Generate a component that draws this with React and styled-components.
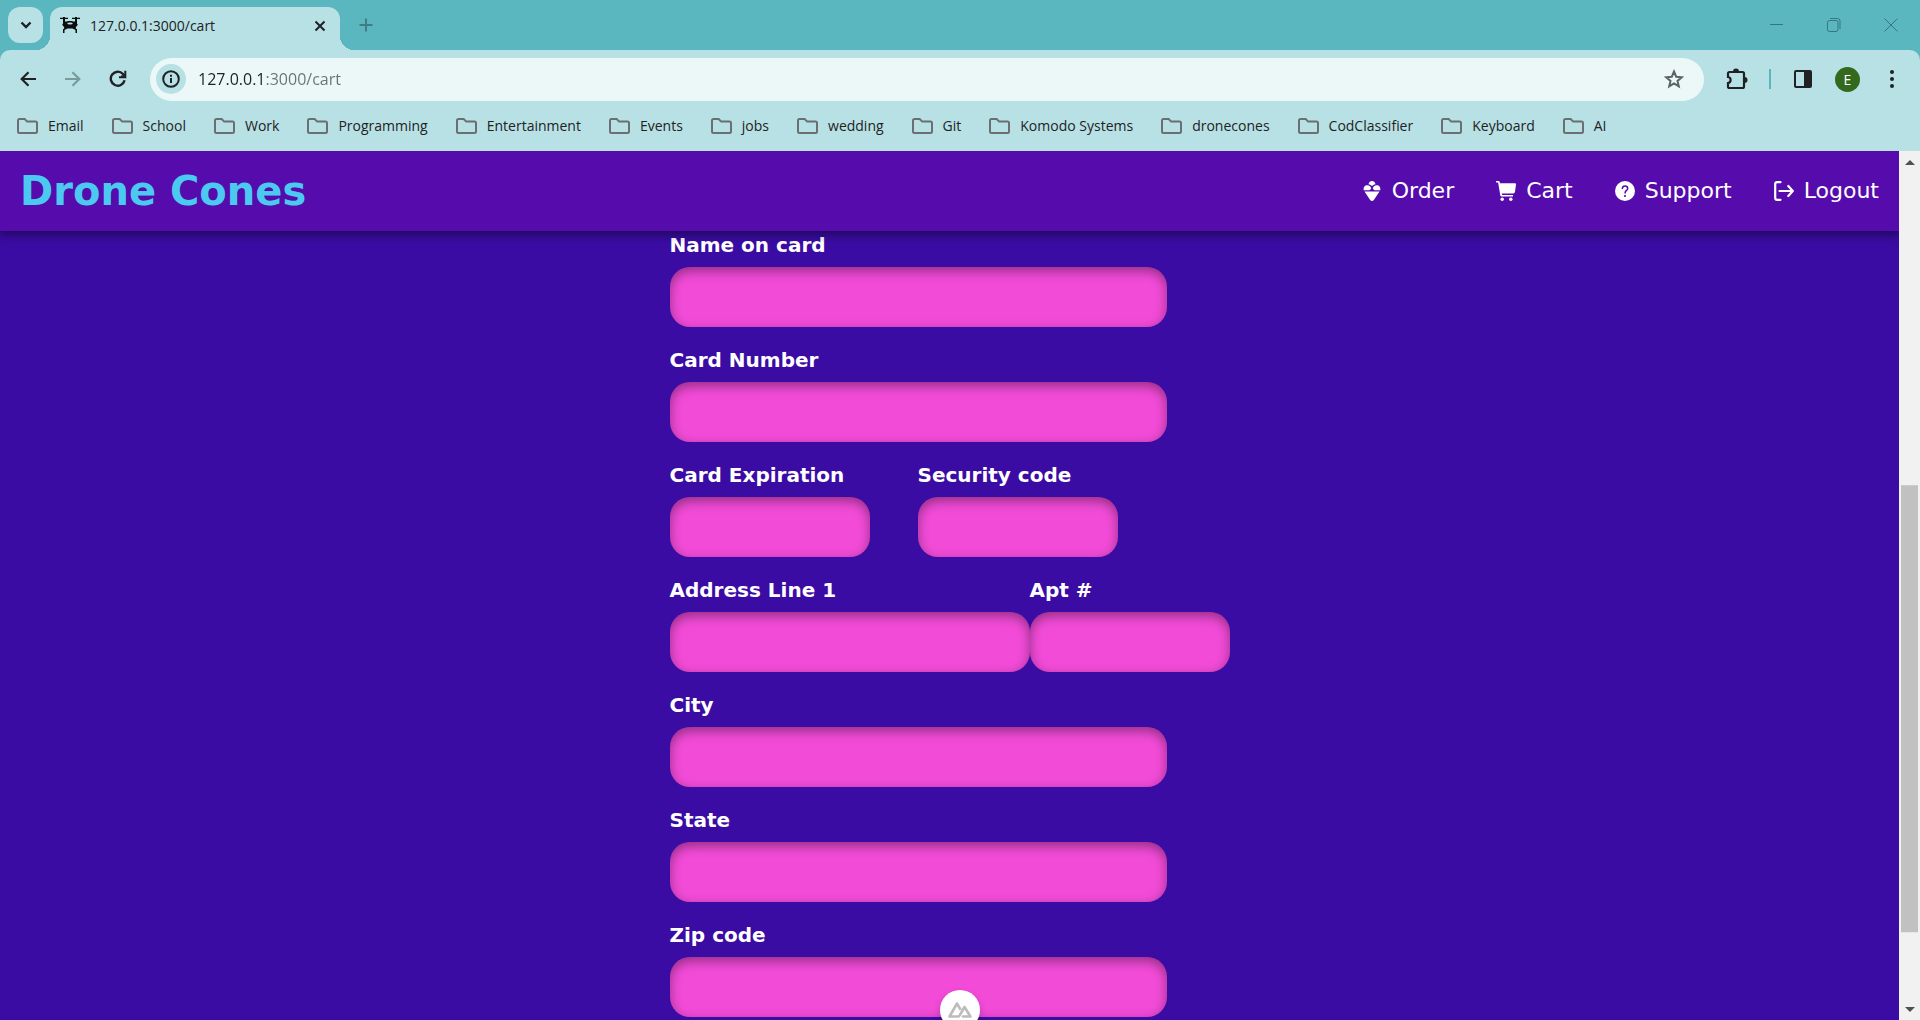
import React from 'react';
import styled, { createGlobalStyle } from 'styled-components';

const GlobalStyle = createGlobalStyle`
  * { box-sizing: border-box; }
  html, body, #root { height: 100%; margin: 0; }
  body { overflow: hidden; font-family: 'Open Sans', 'Noto Sans', sans-serif; color: #1f2124; }
  button { border: 0; padding: 0; background: none; color: inherit; font: inherit; cursor: pointer; }
  a { color: inherit; text-decoration: none; }
  svg { display: block; flex: none; }
`;

const Window = styled.div`
  display: flex;
  flex-direction: column;
  height: 100vh;
  overflow: hidden;
  background: #5ab7c0;
`;

/* Tab strip */
const TabStrip = styled.div`
  display: flex;
  align-items: flex-end;
  height: 50px;
  padding-left: 8px;
`;

const TabSearch = styled.button`
  display: grid;
  place-items: center;
  align-self: center;
  width: 35px;
  height: 36px;
  margin-right: 7px;
  border-radius: 12px;
  background: #b7e1e4;
`;

const Tab = styled.div`
  position: relative;
  display: flex;
  align-items: center;
  gap: 10px;
  width: 290px;
  height: 43px;
  padding: 0 12px 6px 10px;
  border-radius: 12px 12px 0 0;
  background: #b7e1e4;
  font-size: 14px;
  line-height: 20px;

  &::before,
  &::after {
    content: '';
    position: absolute;
    bottom: 0;
    width: 14px;
    height: 14px;
  }
  &::before {
    right: 100%;
    background: radial-gradient(circle at 0 0, transparent 14px, #b7e1e4 14px);
  }
  &::after {
    left: 100%;
    background: radial-gradient(circle at 100% 0, transparent 14px, #b7e1e4 14px);
  }
`;

const TabTitle = styled.span`
  flex: 1;
  white-space: nowrap;
`;

const IconButton = styled.button`
  display: grid;
  place-items: center;
  width: ${(p) => p.$size || 20}px;
  height: ${(p) => p.$size || 20}px;
  color: ${(p) => p.$color || '#1f2124'};
`;

const NewTab = styled(IconButton)`
  align-self: center;
  margin-left: 16px;
`;

const WindowControls = styled.div`
  display: flex;
  align-self: center;
  gap: 37px;
  margin-left: auto;
  padding-right: 19px;
`;

/* Toolbar */
const Toolbar = styled.div`
  display: flex;
  align-items: center;
  height: 58px;
  padding: 0 18px;
  border-radius: 10px 10px 0 0;
  background: #b7e1e4;
`;

const NavButtons = styled.div`
  display: flex;
  gap: 25px;
  margin-right: 22px;
`;

const Omnibox = styled.form`
  display: flex;
  flex: 1;
  align-items: center;
  gap: 12px;
  height: 43px;
  padding: 0 20px 0 6px;
  border-radius: 22px;
  background: #ecf8f8;
`;

const SiteInfo = styled.button`
  display: grid;
  place-items: center;
  width: 30px;
  height: 30px;
  border-radius: 50%;
  background: #b7e1e4;
`;

/* The host part of the address is darker than the port and path. */
const AddressInput = styled.input`
  flex: 1;
  min-width: 0;
  height: 24px;
  padding: 0;
  border: 0;
  outline: 0;
  background: linear-gradient(90deg, #1f2124 68px, #687274 68px);
  background-clip: text;
  -webkit-text-fill-color: transparent;
  font: 16px/24px 'Open Sans', 'Noto Sans', sans-serif;
`;

const ToolbarActions = styled.div`
  display: flex;
  align-items: center;
  margin-left: 21px;
`;

const Separator = styled.span`
  width: 2px;
  height: 20px;
  margin: 0 22px 0 20px;
  background: #5ab7c0;
`;

const Avatar = styled.button`
  width: 25px;
  height: 25px;
  margin: 0 22px;
  border-radius: 50%;
  background: #33691e;
  color: #fff;
  font-size: 14px;
  line-height: 25px;
`;

const Bookmarks = styled.nav`
  display: flex;
  align-items: center;
  gap: 28px;
  height: 43px;
  padding: 0 17px 8px;
  background: #b7e1e4;
  font-size: 14px;
  line-height: 20px;
`;

const Bookmark = styled.a`
  display: flex;
  align-items: center;
  gap: 10px;
  white-space: nowrap;
`;

/* Site */
const Viewport = styled.div`
  display: flex;
  flex: 1;
  min-height: 0;
`;

const Site = styled.div`
  display: flex;
  flex: 1;
  flex-direction: column;
  min-width: 0;
  overflow: hidden;
  background: #3a0ca3;
  color: #fff;
  font-family: 'DejaVu Sans', sans-serif;
`;

const SiteHeader = styled.header`
  display: flex;
  flex: none;
  align-items: center;
  justify-content: space-between;
  height: 80px;
  padding: 0 20px;
  background: #560bad;
  box-shadow: 0 2px 10px 1px rgba(0, 0, 0, 0.5);
  z-index: 1;
`;

const Brand = styled.h1`
  margin: 0;
  color: #4cc9f0;
  font-size: 40px;
  line-height: 48px;
`;

const SiteNav = styled.nav`
  display: flex;
  gap: 42px;
`;

const SiteLink = styled.a`
  display: flex;
  align-items: center;
  gap: 10px;
  font-size: 22px;
  line-height: 28px;
`;

const Main = styled.main`
  flex: 1;
  min-height: 0;
  padding: 2px 0;
  overflow: hidden;
`;

const PaymentForm = styled.form`
  display: flex;
  flex-direction: column;
  gap: 21px;
  width: 560px;
  max-width: 100%;
  margin: 0 auto;
`;

const Row = styled.div`
  display: grid;
  grid-template-columns: ${(p) => p.$columns};
`;

const FieldBox = styled.div`
  display: flex;
  flex-direction: column;
  gap: 10px;
`;

const FieldLabel = styled.label`
  font-size: 20px;
  font-weight: 700;
  line-height: 24px;
  white-space: nowrap;
`;

const FieldInput = styled.input`
  width: ${(p) => p.$width}px;
  height: 60px;
  padding: 0 20px;
  border: 0;
  border-radius: 20px;
  outline: 0;
  background: #f24bd8;
  box-shadow: inset 0 4px 12px rgba(0, 0, 0, 0.4);
  color: #fff;
  font: 20px/24px 'DejaVu Sans', sans-serif;
`;

const Scrollbar = styled.div`
  display: flex;
  flex-direction: column;
  width: 21px;
  background: #f1f1f1;
`;

const ScrollArrow = styled.button`
  display: grid;
  place-items: center;
  height: 22px;
`;

const ScrollTrack = styled.div`
  flex: 1;
  padding: 0 2px;
`;

const ScrollThumb = styled.div`
  background: #c1c1c1;
`;

const DevToolsBadge = styled.button`
  position: fixed;
  bottom: -10px;
  left: 50%;
  z-index: 2;
  display: grid;
  place-items: center;
  width: 40px;
  height: 40px;
  border-radius: 50%;
  background: #fff;
  box-shadow: 0 4px 8px rgba(0, 0, 0, 0.2);
  transform: translateX(-50%);
`;

/* Icons */
const Svg = ({ w = 20, h = w, box = `0 0 ${w} ${h}`, children, ...rest }) => (
  <svg width={w} height={h} viewBox={box} fill="none" stroke="currentColor" aria-hidden="true" {...rest}>
    {children}
  </svg>
);

const DroneIcon = () => (
  <Svg w={20} h={17} fill="#0b0d0e" stroke="none">
    <path d="M0 .8h3V0h2v.8h3V2H5v2.500h2L8 4h4l1 .5h2V2h-3V.8h3V0h2v.8h3V2h-3v4.500l.8 1.200L16 10l-.3 1.500 1.300.8V16h-1.500v-3l-3-1.500h-5l-3 1.500v3H3v-3.700l1.300-.8L4 10 2.200 7.700 3 6.500V2H0z" />
    <ellipse cx="10" cy="6.500" rx="2.800" ry="1.100" fill="#b7e1e4" />
  </Svg>
);

const FolderIcon = () => (
  <Svg w={21} h={16} stroke="#6b6f71" strokeWidth="2">
    <path d="M2.500 1h5.200l2.500 2.600h8.300q1.500 0 1.500 1.500v8.400q0 1.500-1.500 1.500h-16Q1 15 1 13.500V2.500Q1 1 2.500 1z" />
  </Svg>
);

const ConeIcon = () => (
  <Svg fill="#fff" stroke="none">
    <path d="M2.500 10.500h15L12 18.800q-2 2.400-4 0z" />
    <path d="M1.700 9.300C1.200 6 3 4.300 5.200 4.300c2.300 0 3.800 1.500 4 3.400L7.500 9.300zM18.300 9.300c.5-3.300-1.300-5-3.500-5-2.300 0-3.800 1.500-4 3.400l1.700 1.600z" />
    <path d="M6.500 3.200C7 1 8.300 0 10 0s3 1 3.500 3.200C12 3.400 10.700 4.200 10 5.200 9.300 4.200 8 3.400 6.500 3.200z" />
  </Svg>
);

const CartIcon = () => (
  <Svg fill="#fff" stroke="none">
    <path d="M0 0h2.600q.9 0 1.100.9L4 2.200h15q1.200 0 1 1.200l-1 7.400q-.3 1.700-1.700 1.700H5.800l.3 1.500H17v1.600H5.500q-1 0-1.200-1L2.100 1.600H0z" />
    <circle cx="6.200" cy="18.200" r="1.700" />
    <circle cx="14.800" cy="18.200" r="1.700" />
  </Svg>
);

const SupportIcon = () => (
  <Svg>
    <circle cx="10" cy="10" r="10" fill="#fff" stroke="none" />
    <path d="M7.400 7.600C7.400 5.800 8.500 5 10 5s2.700.9 2.700 2.400c0 2-2.600 2-2.600 4.500" stroke="#560bad" strokeWidth="1.500" strokeLinecap="round" />
    <circle cx="10" cy="15" r="1.100" fill="#560bad" stroke="none" />
  </Svg>
);

const LogoutIcon = () => (
  <Svg strokeWidth="2.200" strokeLinecap="round" strokeLinejoin="round">
    <path d="M6.500 1.200H3.200Q1.200 1.200 1.200 3v14q0 1.800 2 1.800h3.300M5.500 10H18M14.300 5l4.500 5-4.500 5" />
  </Svg>
);

const bookmarks = [
  'Email', 'School', 'Work', 'Programming', 'Entertainment', 'Events', 'jobs',
  'wedding', 'Git', 'Komodo Systems', 'dronecones', 'CodClassifier', 'Keyboard', 'AI',
];

const siteLinks = [
  { label: 'Order', icon: ConeIcon },
  { label: 'Cart', icon: CartIcon },
  { label: 'Support', icon: SupportIcon },
  { label: 'Logout', icon: LogoutIcon },
];

const Field = ({ id, label, width = 497 }) => (
  <FieldBox>
    <FieldLabel htmlFor={id}>{label}</FieldLabel>
    <FieldInput id={id} name={id} type="text" $width={width} />
  </FieldBox>
);

const scroll = { top: 313 / 827, size: 448 / 827 };

function BrowserChrome() {
  return (
    <>
      <TabStrip>
        <TabSearch aria-label="Search tabs">
          <Svg w={12} h={8} strokeWidth="2.400"><path d="M1.500 1.500 6 6l4.500-4.500" /></Svg>
        </TabSearch>
        <Tab>
          <DroneIcon />
          <TabTitle>127.0.0.1:3000/cart</TabTitle>
          <IconButton $size={16} aria-label="Close tab">
            <Svg w={12} strokeWidth="2"><path d="m1.500 1.500 9 9m0-9-9 9" /></Svg>
          </IconButton>
        </Tab>
        <NewTab aria-label="New tab" $color="#417d83">
          <Svg w={14} strokeWidth="2"><path d="M7 0.500v13M0.500 7h13" /></Svg>
        </NewTab>
        <WindowControls>
          <IconButton aria-label="Minimize" $color="#35777f">
            <Svg w={14} strokeWidth="1"><path d="M0 6.500h13" /></Svg>
          </IconButton>
          <IconButton aria-label="Restore" $color="#35777f">
            <Svg w={14} strokeWidth="1"><rect x=".5" y="2.500" width="10.500" height="11" rx="2" /><path d="M3 .5h7.500q2.500 0 2.500 2.500v8" /></Svg>
          </IconButton>
          <IconButton aria-label="Close" $color="#35777f">
            <Svg w={14} strokeWidth="1"><path d="m.5.5 13 13m0-13-13 13" /></Svg>
          </IconButton>
        </WindowControls>
      </TabStrip>
      <Toolbar>
        <NavButtons>
          <IconButton aria-label="Back">
            <Svg w={16} strokeWidth="2.200"><path d="M16 8H2M8.500 1.200 1.700 8l6.800 6.800" /></Svg>
          </IconButton>
          <IconButton aria-label="Forward" $color="#7b9a9d">
            <Svg w={16} strokeWidth="2.200"><path d="M0 8h14M7.500 1.200 14.300 8l-6.800 6.800" /></Svg>
          </IconButton>
          <IconButton aria-label="Reload">
            <Svg w={18} strokeWidth="2.400"><path d="M15.600 10.300A7 7 0 1 1 14 4l1.500 1.600" /><path d="M16.300.8v6.400H10M16.300 7.200l-4-1h4z" strokeWidth="2" /></Svg>
          </IconButton>
        </NavButtons>
        <Omnibox>
          <SiteInfo type="button" aria-label="Site information">
            <Svg w={18} strokeWidth="2"><circle cx="9" cy="9" r="7.800" /><path d="M9 8v5M9 4.800v2" /></Svg>
          </SiteInfo>
          <AddressInput aria-label="Address" defaultValue="127.0.0.1:3000/cart" />
          <IconButton type="button" aria-label="Bookmark this page" $color="#5b6365">
            <Svg w={20} strokeWidth="2"><path d="m10 2.500 2.200 5.200 5.600.5-4.300 3.700 1.300 5.500L10 14.500l-4.800 2.900 1.300-5.500-4.300-3.700 5.600-.5z" /></Svg>
          </IconButton>
        </Omnibox>
        <ToolbarActions>
          <IconButton $size={24} aria-label="Extensions">
            <Svg w={22}>
              <path d="M3.500 4h13q1.500 0 1.500 1.500v13q0 1.500-1.500 1.500h-13Q2 20 2 18.500V15c3.500-.5 3.500-5.500 0-6V5.500Q2 4 3.500 4z" strokeWidth="2.200" />
              <path d="M7 3.500a3 3 0 0 1 6 0zM18.500 9a3 3 0 0 1 0 6z" fill="currentColor" stroke="none" />
            </Svg>
          </IconButton>
          <Separator />
          <IconButton aria-label="Side panel">
            <Svg w={20}><rect x="2" y="2" width="16" height="16" rx="1" strokeWidth="2" /><path d="M11 2h7v16h-7z" fill="currentColor" stroke="none" /></Svg>
          </IconButton>
          <Avatar aria-label="Profile">E</Avatar>
          <IconButton aria-label="Menu">
            <Svg w={4} h={18} fill="currentColor" stroke="none"><circle cx="2" cy="2" r="2" /><circle cx="2" cy="9" r="2" /><circle cx="2" cy="16" r="2" /></Svg>
          </IconButton>
        </ToolbarActions>
      </Toolbar>
      <Bookmarks aria-label="Bookmarks">
        {bookmarks.map((name) => (
          <Bookmark key={name} href="#"><FolderIcon />{name}</Bookmark>
        ))}
      </Bookmarks>
    </>
  );
}

export default function App() {
  return (
    <Window>
      <GlobalStyle />
      <BrowserChrome />
      <Viewport>
        <Site>
          <SiteHeader>
            <Brand>Drone Cones</Brand>
            <SiteNav>
              {siteLinks.map(({ label, icon: Icon }) => (
                <SiteLink key={label} href="#"><Icon />{label}</SiteLink>
              ))}
            </SiteNav>
          </SiteHeader>
          <Main>
            <PaymentForm>
              <Field id="card-name" label="Name on card" />
              <Field id="card-number" label="Card Number" />
              <Row $columns="248px 248px">
                <Field id="expiration" label="Card Expiration" width={200} />
                <Field id="security-code" label="Security code" width={200} />
              </Row>
              <Row $columns="360px 200px">
                <Field id="address" label="Address Line 1" width={360} />
                <Field id="apartment" label="Apt #" width={200} />
              </Row>
              <Field id="city" label="City" />
              <Field id="state" label="State" />
              <Field id="zip" label="Zip code" />
            </PaymentForm>
          </Main>
        </Site>
        <Scrollbar>
          <ScrollArrow aria-label="Scroll up">
            <Svg w={10} h={5} fill="#505050" stroke="none"><path d="M0 5 5 0l5 5z" /></Svg>
          </ScrollArrow>
          <ScrollTrack>
            <ScrollThumb style={{ height: `${scroll.size * 100}%`, transform: `translateY(${(scroll.top / scroll.size) * 100}%)` }} />
          </ScrollTrack>
          <ScrollArrow aria-label="Scroll down">
            <Svg w={10} h={5} fill="#505050" stroke="none"><path d="m0 0 5 5 5-5z" /></Svg>
          </ScrollArrow>
        </Scrollbar>
      </Viewport>
      <DevToolsBadge aria-label="Open DevTools">
        <Svg w={24} h={16} stroke="#bcbcbc" strokeWidth="2.600" strokeLinejoin="round" strokeLinecap="round">
          <path d="M9.500 14.500H1.500L9 1.500l3.200 5.500M9.500 14.500q1.500 0 2.200-1.200L16.500 5l6 9.500H15" />
        </Svg>
      </DevToolsBadge>
    </Window>
  );
}
